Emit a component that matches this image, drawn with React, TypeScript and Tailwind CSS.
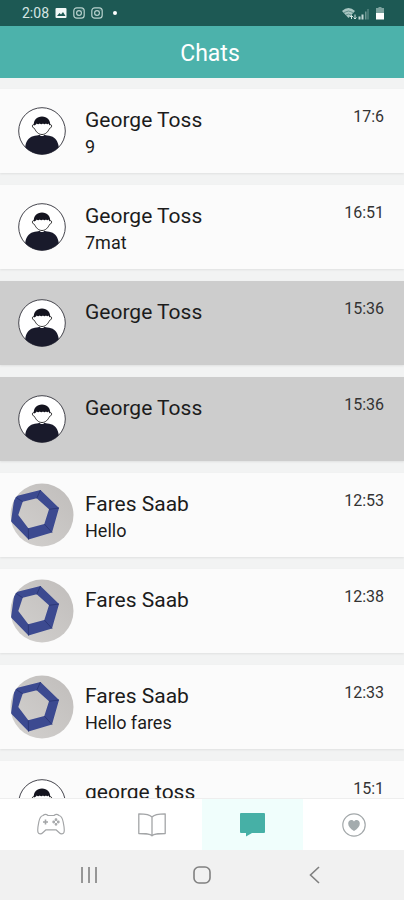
import { clsx } from 'clsx';
import React, { useState } from 'react';

interface IChat {
  id: number;
  name: string;
  message: string;
  time: string;
  photo?: boolean;
  unread?: boolean;
}

const chats: IChat[] = [
  { id: 1, name: 'George Toss', message: '9', time: '17:6' },
  { id: 2, name: 'George Toss', message: '7mat', time: '16:51' },
  { id: 3, name: 'George Toss', message: '', time: '15:36', unread: true },
  { id: 4, name: 'George Toss', message: '', time: '15:36', unread: true },
  { id: 5, name: 'Fares Saab', message: 'Hello', time: '12:53', photo: true },
  { id: 6, name: 'Fares Saab', message: '', time: '12:38', photo: true },
  {
    id: 7,
    name: 'Fares Saab',
    message: 'Hello fares',
    time: '12:33',
    photo: true,
  },
  { id: 8, name: 'george toss', message: '', time: '15:1' },
];

const DefaultAvatar = () => (
  <svg viewBox="0 0 48 48" className="size-12" aria-hidden="true">
    <circle cx="24" cy="24" r="23.3" fill="#fff" stroke="#44444c" />
    <path
      d="M7.200 40.200C8 34 10.500 30.500 15 29.200c2.500-.7 5-.7 6.500-1.400 1 1.700 4 1.700 5 0 1.500.7 4 .7 6.500 1.400 4.500 1.300 7 5 7.800 11A23 23 0 0 1 7.200 40.200Z"
      fill="#191a2b"
    />
    <path
      d="M16.200 17.500c-2.500-.3-2.500 3 .3 4 1.500 3.300 4 6 7.500 6s6-2.700 7.500-6c2.800-1 2.800-4.300.3-4"
      fill="#fff"
      stroke="#333"
      strokeWidth="1"
    />
    <path
      d="M15.800 18.500c-.4-5.500 3-9 8.200-9s8.600 3.500 8.200 9c-.8-.2-1.200-1-1.500-1.900-1 .8-2 .7-2.700-.1-1 1-2.200 1-3 0-1 1-2.400 1-3.200 0-1 .9-2.200.9-3.200.1-.4 1-1.400 1.800-2.800 1.900Z"
      fill="#14141f"
    />
  </svg>
);

const PhotoAvatar = () => (
  <svg viewBox="0 0 64 64" className="size-16" aria-hidden="true">
    <defs>
      <linearGradient id="paper" x1="0" y1="1" x2="1" y2="0">
        <stop offset="0" stopColor="#d3d1cf" />
        <stop offset="1" stopColor="#c0bdbb" />
      </linearGradient>
      <clipPath id="round">
        <circle cx="32" cy="32" r="31.500" />
      </clipPath>
    </defs>
    <g clipPath="url(#round)">
      <rect width="64" height="64" fill="url(#paper)" />
      <path
        d="M4.500 13.500 30.500 7l18.500 18-7 24.500-23.500 7L1 38.500Z M12.700 18.700 8.300 32l10 13.300 16-4.300L39 26.300l-12.300-11Z"
        fill="#3c4a90"
        fillRule="evenodd"
      />
      <path
        d="m30.500 7-3.800 8.300M49 25l-10 1.300M42 49.500 34.300 41M18.500 56.500l-.2-11.200M4.500 13.500l8.200 5.200"
        stroke="#2c3877"
        strokeWidth="1"
      />
    </g>
  </svg>
);

const StatusBar = () => (
  <div className="flex h-[26px] shrink-0 items-center justify-between bg-[#1d5954] pr-5 pl-[22px] text-[#d5e6e3]">
    <div className="flex items-center gap-[6px]">
      <span className="text-sm">2:08</span>
      <svg viewBox="0 0 12 12" className="size-3" aria-hidden="true">
        <rect x=".5" y="1" width="11" height="10" rx="1" fill="#f2f8f7" />
        <path d="m2 9 2.500-3 1.500 1.500L8 5l2.500 4Z" fill="#1d5954" />
      </svg>
      <InstagramGlyph />
      <InstagramGlyph />
      <span className="ml-1 size-1 rounded-full bg-white" />
    </div>
    <div className="flex items-center gap-1">
      <svg viewBox="0 0 32 13" className="h-[13px] w-8" aria-hidden="true">
        <path d="M2 4Q8.500-2 15 4L8.500 11Z" fill="#a9c6c2" />
        <path
          d="M4 5.500q4.500-3 9 0M6 8q2.500-2 5 0"
          fill="none"
          stroke="#1d5954"
          strokeWidth=".5"
        />
        <path
          d="M11.500 12V8.500M10 10l1.500-1.500L13 10M15 7.500V12m-1.500-1.500L15 12l1.500-1.500"
          fill="none"
          stroke="#d5e6e3"
        />
        <path d="M18.500 9.500h2v3h-2ZM21.500 7.500h2v5h-2Z" fill="#c3d8d5" />
        <path d="M25 4.500h1.500v8H25ZM27.500 2h1v10.500h-1Z" fill="#6f9893" />
      </svg>
      <svg viewBox="0 0 8 13" className="h-[13px] w-2" aria-hidden="true">
        <path d="M2.500 0h3v1H8v5H0V1h2.500Z" fill="#7da39f" />
        <path d="M0 6h8v6.500H0Z" fill="#fff" />
      </svg>
    </div>
  </div>
);

const InstagramGlyph = () => (
  <svg
    viewBox="0 0 12 12"
    className="size-3"
    fill="none"
    stroke="#b9d2ce"
    strokeWidth="1.200"
    aria-hidden="true"
  >
    <rect x=".8" y=".8" width="10.400" height="10.400" rx="3" />
    <circle cx="6" cy="6" r="2.400" />
    <path d="M8.800 3h.6" />
  </svg>
);

const GamepadIcon = () => (
  <svg
    viewBox="0 0 28 24"
    className="h-6 w-7"
    fill="none"
    stroke="#a3a5a7"
    strokeWidth="1.200"
    strokeLinejoin="round"
    aria-hidden="true"
  >
    <path d="M6 2.500C7.500 1.200 9.500 1.200 11 2.500h6c1.500-1.300 3.500-1.300 5 0 2.500.5 3.500 3 4.200 6.500.8 4 1.600 8 .8 10.200-.9 2.300-3.300 2-5 .3L19 16.800H9L6 19.500c-1.700 1.700-4.100 2-5-.3C.2 17 1 13 1.800 9 2.500 5.500 3.500 3 6 2.500Z" />
    <path d="M8.500 6.500v5M6 9h5" strokeWidth="1.600" />
    <circle cx="19" cy="6.700" r=".8" />
    <circle cx="19" cy="11.300" r=".8" />
    <circle cx="16.700" cy="9" r=".8" />
    <circle cx="21.300" cy="9" r=".8" />
  </svg>
);

const BookIcon = () => (
  <svg
    viewBox="0 0 28 24"
    className="h-6 w-7"
    fill="none"
    stroke="#a3a5a7"
    strokeWidth="1.300"
    strokeLinejoin="round"
    aria-hidden="true"
  >
    <path d="M14 4C12 1.500 8 .8 .8 .8v19.700c7.200 0 11.200 0 13.200 2.200 2-2.200 6-2.200 13.200-2.200V.8C20 .8 16 1.500 14 4Zm0 0v18.700" />
  </svg>
);

const ChatIcon = () => (
  <svg viewBox="0 0 28 24" className="h-6 w-7" aria-hidden="true">
    <path
      d="M2 0h23q1 0 1 1v18q0 1-1 1H13l-6 3.500V20H2q-1 0-1-1V1q0-1 1-1Z"
      fill="#46b0a6"
    />
  </svg>
);

const HeartIcon = () => (
  <svg viewBox="0 0 24 24" className="size-6" aria-hidden="true">
    <circle
      cx="12"
      cy="12"
      r="11.200"
      fill="none"
      stroke="#a3a8aa"
      strokeWidth="1.200"
    />
    <path
      d="M12 18C8 15.500 6.200 13 6.200 10.500 6.200 7 10 5.800 12 8.500c2-2.700 5.800-1.500 5.800 2C17.800 13 16 15.500 12 18Z"
      fill="#a3abad"
    />
  </svg>
);

const tabs = [
  { label: 'Games', Icon: GamepadIcon },
  { label: 'Library', Icon: BookIcon },
  { label: 'Chats', Icon: ChatIcon },
  { label: 'Favourites', Icon: HeartIcon },
];

const ChatRow = ({ chat }: { chat: IChat }) => (
  <li>
    <button
      type="button"
      className={clsx(
        'flex h-[84px] w-full items-center pr-5 pl-[10px] text-left shadow-[0_1px_2px_rgba(0,0,0,0.08)]',
        chat.unread ? 'bg-[#cdcdcd]' : 'bg-[#fbfbfb]',
      )}
    >
      <span className="flex w-16 shrink-0 justify-center">
        {chat.photo ? <PhotoAvatar /> : <DefaultAvatar />}
      </span>
      <span className="ml-[11px] flex min-w-0 flex-1 flex-col gap-px self-stretch pt-[17px]">
        <span className="text-[21px] leading-7 text-[#1c1c1c]">
          {chat.name}
        </span>
        <span className="text-lg leading-6 text-[#1c1c1c]">
          {chat.message}
        </span>
      </span>
      <span className="self-start pt-[18px] text-base leading-5 text-[#333]">
        {chat.time}
      </span>
    </button>
  </li>
);

const App = () => {
  const [activeTab, setActiveTab] = useState('Chats');

  return (
    <div className="flex h-screen flex-col bg-[#f2f3f3] font-[Roboto,sans-serif]">
      <StatusBar />
      <header className="flex h-[52px] shrink-0 items-center justify-center bg-[#4cb2ab] pt-1 pl-4 text-white">
        <h1 className="text-[23px] leading-7">Chats</h1>
      </header>

      <ul className="flex min-h-0 flex-1 flex-col gap-3 overflow-hidden pt-[11px]">
        {chats.map((chat) => (
          <ChatRow key={chat.id} chat={chat} />
        ))}
      </ul>

      <nav className="grid h-[52px] shrink-0 grid-cols-4 border-t border-[#eeeeee] bg-white">
        {tabs.map(({ label, Icon }) => (
          <button
            key={label}
            type="button"
            aria-label={label}
            onClick={() => setActiveTab(label)}
            className={clsx(
              'flex items-center justify-center',
              label === activeTab && 'bg-[#f0fefc]',
            )}
          >
            <Icon />
          </button>
        ))}
      </nav>

      <div className="flex h-[50px] shrink-0 items-center justify-center gap-[93px] bg-[#f1f1f1] text-[#808080]">
        <button type="button" aria-label="Recent apps">
          <svg
            viewBox="0 0 20 20"
            className="size-5"
            stroke="currentColor"
            strokeWidth="1.600"
            aria-hidden="true"
          >
            <path d="M3 2v16M10 2v16M17 2v16" />
          </svg>
        </button>
        <button type="button" aria-label="Home">
          <svg
            viewBox="0 0 20 20"
            className="size-5"
            fill="none"
            stroke="currentColor"
            strokeWidth="1.600"
            aria-hidden="true"
          >
            <rect x="2" y="2" width="16" height="16" rx="5" />
          </svg>
        </button>
        <button type="button" aria-label="Back">
          <svg
            viewBox="0 0 20 20"
            className="size-5"
            fill="none"
            stroke="currentColor"
            strokeWidth="1.600"
            aria-hidden="true"
          >
            <path d="m14 2-8.500 8 8.500 8" />
          </svg>
        </button>
      </div>
    </div>
  );
};

export default App;
